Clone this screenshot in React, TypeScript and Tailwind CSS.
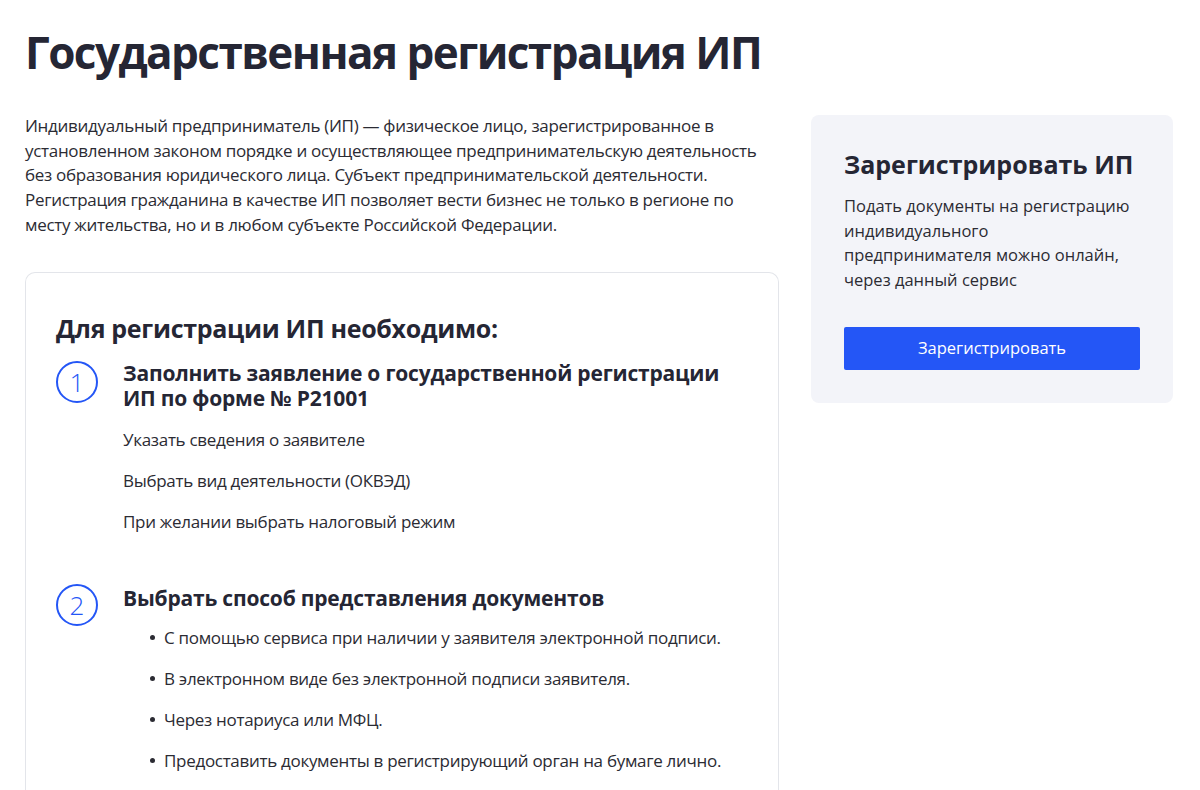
const steps1 = [
  "Указать сведения о заявителе",
  "Выбрать вид деятельности (ОКВЭД)",
  "При желании выбрать налоговый режим",
];

const steps2 = [
  "С помощью сервиса при наличии у заявителя электронной подписи.",
  "В электронном виде без электронной подписи заявителя.",
  "Через нотариуса или МФЦ.",
  "Предоставить документы в регистрирующий орган на бумаге лично.",
];

function StepNumber({ n }: { n: number }) {
  return (
    <div className="flex h-[42px] w-[42px] shrink-0 items-center justify-center rounded-full border-2 border-[#2456f6] text-[26px] font-light leading-none text-[#2456f6]">
      {n}
    </div>
  );
}

export default function App() {
  return (
    <div className="min-h-[790px] bg-white px-[25px] pt-[26px] font-['Open_Sans',sans-serif] text-[#23232f]">
      <h1 className="text-[44px] font-bold leading-[52px] tracking-[-1.55px] text-[#252634]">
        Государственная регистрация ИП
      </h1>

      <div className="mt-[36px] flex items-start gap-[32px]">
        <div className="w-[754px] shrink-0">
          <p className="text-[17px] leading-[24.7px] tracking-[-0.3px] text-[#2b2b33]">
            Индивидуальный предприниматель (ИП) — физическое лицо, зарегистрированное в
            <br />
            установленном законом порядке и осуществляющее предпринимательскую деятельность
            <br />
            без образования юридического лица. Субъект предпринимательской деятельности.
            <br />
            Регистрация гражданина в качестве ИП позволяет вести бизнес не только в регионе по
            <br />
            месту жительства, но и в любом субъекте Российской Федерации.
          </p>

          <div className="mt-[34px] rounded-t-[10px] border border-b-0 border-[#e3e5ea] px-[30px] pb-[20px] pt-[38px]">
            <h2 className="text-[25px] font-bold leading-[34px] tracking-[-0.3px] text-[#252634]">
              Для регистрации ИП необходимо:
            </h2>

            <div className="mt-[16px] flex gap-[25px]">
              <StepNumber n={1} />
              <div>
                <div className="text-[21px] font-bold leading-[25px] tracking-[-0.2px] text-[#252634]">
                  <div>Заполнить заявление о государственной регистрации</div>
                  <div>ИП по форме № Р21001</div>
                </div>
                <ul className="mt-[17px] flex flex-col gap-[17px] text-[17px] leading-[24px] tracking-[-0.3px] text-[#2b2b33]">
                  {steps1.map((s) => (
                    <li key={s}>{s}</li>
                  ))}
                </ul>
              </div>
            </div>

            <div className="mt-[50px] flex gap-[25px]">
              <StepNumber n={2} />
              <div>
                <div className="pt-[2px] text-[21px] font-bold leading-[25px] tracking-[-0.2px] text-[#252634]">
                  Выбрать способ представления документов
                </div>
                <ul className="mt-[15px] flex flex-col gap-[17px] text-[17px] leading-[24px] tracking-[-0.3px] text-[#2b2b33]">
                  {steps2.map((s) => (
                    <li key={s} className="flex items-center gap-[9px] pl-[27px]">
                      <span className="h-[5px] w-[5px] rounded-full bg-[#2b2b33]" />
                      {s}
                    </li>
                  ))}
                </ul>
              </div>
            </div>
          </div>
        </div>

        <div className="mt-[1px] w-[362px] rounded-[8px] bg-[#f3f4f9] px-[33px] pb-[33px] pt-[32px]">
          <h3 className="text-[25px] font-bold leading-[34px] text-[#252634]">Зарегистрировать ИП</h3>
          <p className="mt-[13px] text-[16.5px] leading-[24.5px] text-[#2b2b33]">
            Подать документы на регистрацию
            <br />
            индивидуального
            <br />
            предпринимателя можно онлайн,
            <br />
            через данный сервис
          </p>
          <button className="mt-[35px] h-[43px] w-full rounded-[2px] bg-[#2456f6] text-[16.5px] text-white">
            Зарегистрировать
          </button>
        </div>
      </div>
    </div>
  );
}
